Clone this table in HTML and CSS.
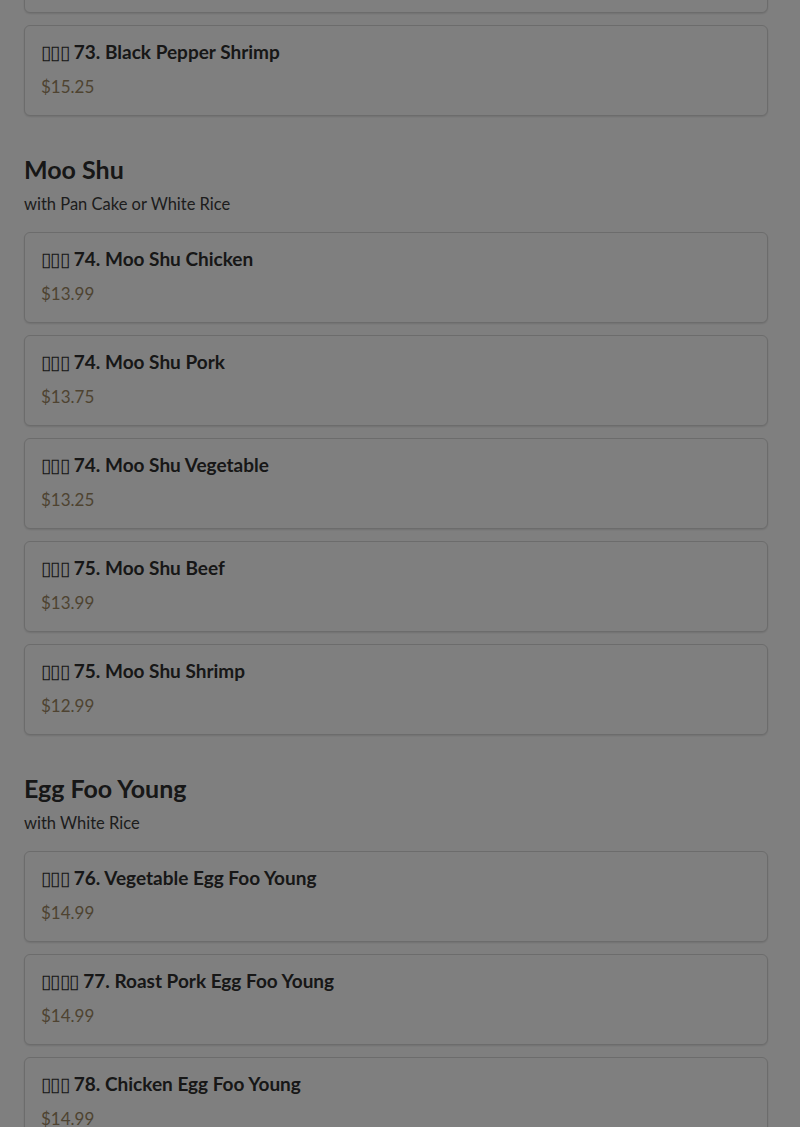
FILE: index.html
```html
<!DOCTYPE html>
<html lang="en">
<head>
<meta charset="utf-8">
<title>Menu</title>
<link rel="stylesheet" href="styles.css">
</head>
<body>
<main class="menu">
  <section class="section first">
    <div class="item item-hidden"></div>
    <div class="item">
      <h3 class="item-name"><span class="zh">▯▯▯</span> 73. Black Pepper Shrimp</h3>
      <p class="price">$15.25</p>
    </div>
  </section>
  <section class="section">
    <h2 class="section-title">Moo Shu</h2>
    <p class="section-note">with Pan Cake or White Rice</p>
    <div class="item">
      <h3 class="item-name"><span class="zh">▯▯▯</span> 74. Moo Shu Chicken</h3>
      <p class="price">$13.99</p>
    </div>
    <div class="item">
      <h3 class="item-name"><span class="zh">▯▯▯</span> 74. Moo Shu Pork</h3>
      <p class="price">$13.75</p>
    </div>
    <div class="item">
      <h3 class="item-name"><span class="zh">▯▯▯</span> 74. Moo Shu Vegetable</h3>
      <p class="price">$13.25</p>
    </div>
    <div class="item">
      <h3 class="item-name"><span class="zh">▯▯▯</span> 75. Moo Shu Beef</h3>
      <p class="price">$13.99</p>
    </div>
    <div class="item">
      <h3 class="item-name"><span class="zh">▯▯▯</span> 75. Moo Shu Shrimp</h3>
      <p class="price">$12.99</p>
    </div>
  </section>
  <section class="section">
    <h2 class="section-title">Egg Foo Young</h2>
    <p class="section-note">with White Rice</p>
    <div class="item">
      <h3 class="item-name"><span class="zh">▯▯▯</span> 76. Vegetable Egg Foo Young</h3>
      <p class="price">$14.99</p>
    </div>
    <div class="item">
      <h3 class="item-name"><span class="zh">▯▯▯▯</span> 77. Roast Pork Egg Foo Young</h3>
      <p class="price">$14.99</p>
    </div>
    <div class="item">
      <h3 class="item-name"><span class="zh">▯▯▯</span> 78. Chicken Egg Foo Young</h3>
      <p class="price">$14.99</p>
    </div>
  </section>
</main>
<div class="backdrop"></div>
</body>
</html>
```
FILE: styles.css
```css
html, body {
  margin: 0;
  padding: 0;
  background: #fff;
  overflow: hidden;
}
body {
  font-family: "Lato", "Noto Sans", sans-serif;
  color: #333;
}
.menu {
  padding: 0 32px 0 24px;
  margin-top: -78px;
}
.section {
  display: flex;
  flex-direction: column;
  gap: 12px;
  margin-top: 38px;
}
.section.first {
  margin-top: 0;
}
.section-title {
  margin: 0;
  font-size: 25px;
  line-height: 31px;
  font-weight: 700;
  color: #2f2f2f;
}
.section-note {
  margin: -5px 0 4px;
  font-size: 16.5px;
  line-height: 24px;
  color: #3a3a3a;
}
.item {
  border: 1px solid #d8d8d8;
  border-radius: 6px;
  padding: 16px;
  box-shadow: 0 1px 2px rgba(0,0,0,0.12);
  background: #fff;
}
.item-hidden {
  height: 57px;
}
.item-name {
  margin: 0 0 13px;
  height: 20px;
  font-size: 19px;
  line-height: 20px;
  font-weight: 700;
  color: #2f2f2f;
  white-space: nowrap;
}
.zh {
  font-weight: 400;
  line-height: 0;
  letter-spacing: -0.6px;
}
.price {
  margin: 0;
  font-size: 17px;
  line-height: 24px;
  color: #9c8763;
}
.backdrop {
  position: fixed;
  inset: 0;
  background: rgba(0,0,0,0.5);
}
```
